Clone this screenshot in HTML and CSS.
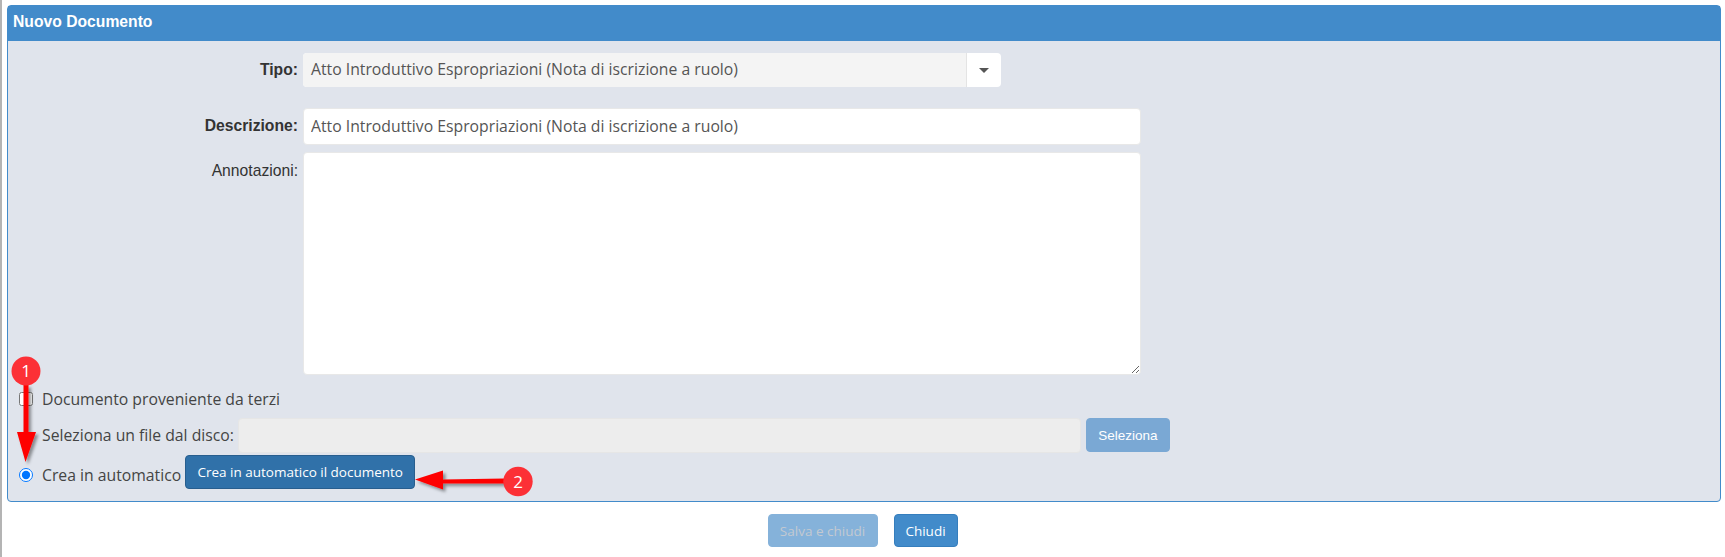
FILE: index.html
```html
<!DOCTYPE html>
<html lang="it">
<head>
<meta charset="utf-8">
<title>Nuovo Documento</title>
<link rel="stylesheet" href="styles.css">
</head>
<body>
<section class="panel">
  <h1 class="panel-title">Nuovo Documento</h1>
  <div class="panel-body">
    <div class="field field-tipo">
      <label class="field-label strong">Tipo:</label>
      <div class="combo">
        <span class="combo-value">Atto Introduttivo Espropriazioni (Nota di iscrizione a ruolo)</span>
        <span class="combo-toggle"><span class="caret"></span></span>
      </div>
    </div>
    <div class="field field-desc">
      <label class="field-label strong" for="descr">Descrizione:</label>
      <input class="control control-desc" id="descr" type="text" value="Atto Introduttivo Espropriazioni (Nota di iscrizione a ruolo)">
    </div>
    <div class="field field-notes">
      <label class="field-label" for="notes">Annotazioni:</label>
      <textarea class="control control-notes" id="notes"></textarea>
    </div>
    <div class="option option-check">
      <input class="tick" type="checkbox" id="terzi">
      <label class="option-label" for="terzi">Documento proveniente da terzi</label>
    </div>
    <div class="option option-file">
      <label class="option-label">Seleziona un file dal disco:</label>
      <div class="file-path"></div>
      <button class="btn btn-select" type="button">Seleziona</button>
    </div>
    <div class="option option-auto">
      <input class="tick" type="radio" id="auto" name="src" checked>
      <label class="option-label" for="auto">Crea in automatico</label>
      <button class="btn btn-auto" type="button">Crea in automatico il documento</button>
    </div>
  </div>
</section>
<div class="actions">
  <button class="btn btn-save" type="button">Salva e chiudi</button>
  <button class="btn btn-close" type="button">Chiudi</button>
</div>

<svg class="annotations" width="1725" height="557" viewBox="0 0 1725 557" aria-hidden="true">
  <defs>
    <filter id="soft" x="-30%" y="-30%" width="160%" height="160%">
      <feDropShadow dx="2.500" dy="2.500" stdDeviation="1.800" flood-color="#000" flood-opacity="0.4"/>
    </filter>
  </defs>
  <g filter="url(#soft)">
    <path d="M23.5 385H28.5V432H36L25.500 462L17 432H23.500Z" fill="#fe0000"/>
  </g>
  <g filter="url(#soft)">
    <path d="M505 478.500V483.500H443V489.500L415 479.500L443 470.500V479.500Z" fill="#fe0000"/>
  </g>
  <circle cx="26" cy="371" r="14.500" fill="#fc3036"/>
  <circle cx="518" cy="481.500" r="14.700" fill="#fc3036"/>
  <text class="badge-num" x="26" y="377" text-anchor="middle">1</text>
  <text class="badge-num" x="518" y="487.500" text-anchor="middle">2</text>
</svg>
</body>
</html>
```
FILE: styles.css
```css
* { box-sizing: border-box; }

html, body { height: 100%; }

body {
  margin: 0;
  position: relative;
  height: 557px;
  overflow: hidden;
  background: #fff;
  border-left: 2px solid #b4b4b4;
  font-family: "Open Sans", "Liberation Sans", sans-serif;
  font-size: 15.75px;
  color: #555;
}

.panel {
  margin: 5px 4px 0 5px;
  height: 497px;
  border: 1px solid #428bca;
  border-radius: 4px;
  background: #e0e4ec;
}

.panel-title {
  margin: 0;
  height: 35px;
  padding: 0 5px;
  background: #428bca;
  color: #fff;
  font: bold 15.7px/32px "Liberation Sans", sans-serif;
}

.panel-body { padding-top: 12px; }

.field { display: flex; }

.field-label {
  flex: 0 0 295px;
  padding-right: 5px;
  text-align: right;
  font: 15.7px/34px "Liberation Sans", sans-serif;
  color: #333;
}

.strong { font-weight: bold; }

.field-desc { margin-top: 21px; }
.field-notes { margin-top: 7px; }
.field-notes .field-label { line-height: 37px; }
.field-desc .field-label { line-height: 35px; }

.combo {
  display: flex;
  width: 698px;
  height: 34px;
  border-radius: 4px;
  overflow: hidden;
  background: #fff;
}

.combo-value {
  flex: 1;
  padding: 0 8px;
  background: #f4f4f4;
  line-height: 33px;
  white-space: nowrap;
}

.combo-toggle {
  flex: 0 0 35px;
  display: flex;
  align-items: center;
  justify-content: center;
  border-left: 1px solid #e4e4e4;
}

.caret {
  border-top: 5px solid #555;
  border-left: 5px solid transparent;
  border-right: 5px solid transparent;
}

.control {
  display: block;
  width: 838px;
  border: 1px solid #e8e8e8;
  border-radius: 4px;
  background: #fff;
  padding: 0 7px;
  font: inherit;
  color: #555;
}

.control-desc { height: 37px; padding-bottom: 2px; }
.control-notes { height: 223px; padding-top: 6px; }

.option { display: flex; align-items: center; }

.option-check { margin-top: 13px; height: 22px; }
.option-file { margin-top: 8px; height: 34px; }
.option-auto { margin-top: 3px; height: 34px; }

.tick { margin: 0 9px 0 11px; width: 14px; height: 14px; flex: none; }
.option-file .option-label { margin-left: 34px; }

.option-label { white-space: nowrap; color: #444; }
.option-auto .option-label { position: relative; top: 3px; }
.option-auto .tick { position: relative; top: 3px; }

.file-path {
  width: 843px;
  height: 35px;
  margin-left: 4px;
  border-radius: 4px;
  background: #ededed;
  border: 1px solid #e6e6e6;
}

.btn {
  height: 34px;
  border: 1px solid #3a7fb9;
  border-radius: 4px;
  padding: 0;
  color: #fff;
  font: 13.5px "Open Sans", "Liberation Sans", sans-serif;
  cursor: pointer;
}

.btn-select {
  width: 84px;
  margin-left: 5px;
  background: #7aa8d4;
  border-color: #7aa8d4;
  font-family: "Liberation Sans", sans-serif;
}

.btn-auto {
  width: 230px;
  margin-left: 4px;
  background: #3071a9;
  border-color: #285e8e;
}

.actions {
  display: flex;
  justify-content: center;
  gap: 16px;
  margin-top: 12px;
  padding-right: 2px;
}

.btn-save {
  width: 110px;
  height: 33px;
  background: #85b2da;
  border-color: #85b2da;
  color: #c3c9d1;
}

.btn-close {
  width: 64px;
  height: 33px;
  background: #428bca;
  border-color: #357ebd;
}

.annotations {
  position: absolute;
  left: -2px;
  top: 0;
  pointer-events: none;
}

.badge-num {
  fill: #fff;
  font: 17px "Open Sans", sans-serif;
}
```
